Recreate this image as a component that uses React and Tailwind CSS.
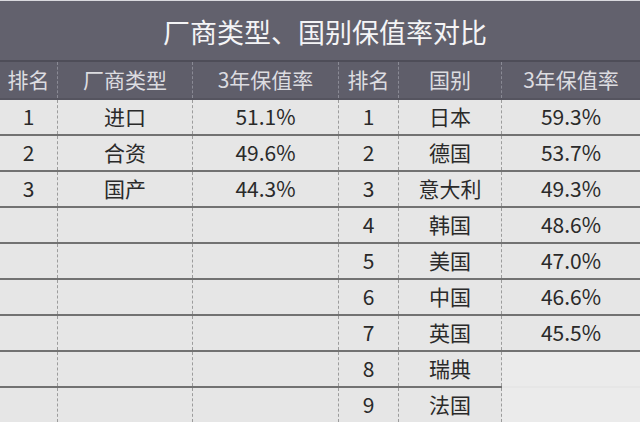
import React from "react";

const brands = [
  ["1", "进口", "51.1%"],
  ["2", "合资", "49.6%"],
  ["3", "国产", "44.3%"],
];

const countries = [
  ["1", "日本", "59.3%"],
  ["2", "德国", "53.7%"],
  ["3", "意大利", "49.3%"],
  ["4", "韩国", "48.6%"],
  ["5", "美国", "47.0%"],
  ["6", "中国", "46.6%"],
  ["7", "英国", "45.5%"],
  ["8", "瑞典", ""],
  ["9", "法国", ""],
];

function Cell({ children, last, faded }) {
  return (
    <div className={"flex flex-col " + (faded ? "bg-[#ebebeb]" : "")}>
      <div
        className={
          "flex-1 flex items-center justify-center " +
          (last ? "" : "border-r border-dashed border-[#9c9c9c]")
        }
      >
        {children}
      </div>
      <div className={"h-[2px] " + (faded ? "bg-[#e6e6e6]" : "bg-[#727272]")} />
    </div>
  );
}

function HeadCell({ children, last }) {
  return (
    <div
      className={
        "flex items-center justify-center " +
        (last ? "" : "border-r border-dashed border-[#8a8a95]")
      }
    >
      {children}
    </div>
  );
}

function App() {
  const rows = Array.from({ length: 9 }, (_, i) => ({
    left: brands[i] || ["", "", ""],
    right: countries[i],
  }));

  return (
    <div
      className="w-[640px] h-[422px] overflow-hidden bg-[#e6e6e6] text-[#2a2a2a]"
      style={{ fontFamily: '"Noto Sans CJK SC", "Noto Sans", sans-serif' }}
    >
      {/* Title */}
      <div className="h-[62px] bg-[#62616d] border-t border-t-[#d9d9de] border-b-2 border-b-[#4e4d58] flex items-center justify-center pl-[10px] pt-[4px]">
        <h1 className="text-[27px] text-[#f4f4f6]">厂商类型、国别保值率对比</h1>
      </div>

      {/* Header */}
      <div className="grid grid-cols-[58px_135px_146px_60px_103px_138px] h-[38px] bg-[#5f5e6a] text-[#dcdce0] text-[21px] border-b-2 border-b-[#55545f]">
        <HeadCell>排名</HeadCell>
        <HeadCell>厂商类型</HeadCell>
        <HeadCell>3年保值率</HeadCell>
        <HeadCell>排名</HeadCell>
        <HeadCell>国别</HeadCell>
        <HeadCell last>3年保值率</HeadCell>
      </div>

      {/* Body */}
      {rows.map((r, i) => (
        <div
          key={i}
          className="grid grid-cols-[58px_135px_146px_60px_103px_138px] h-[36px] text-[21px]"
        >
          <Cell>{r.left[0]}</Cell>
          <Cell>{r.left[1]}</Cell>
          <Cell>{r.left[2]}</Cell>
          <Cell>{r.right[0]}</Cell>
          <Cell>{r.right[1]}</Cell>
          <Cell last faded={i >= 7}>{r.right[2]}</Cell>
        </div>
      ))}
    </div>
  );
}

export default App;
